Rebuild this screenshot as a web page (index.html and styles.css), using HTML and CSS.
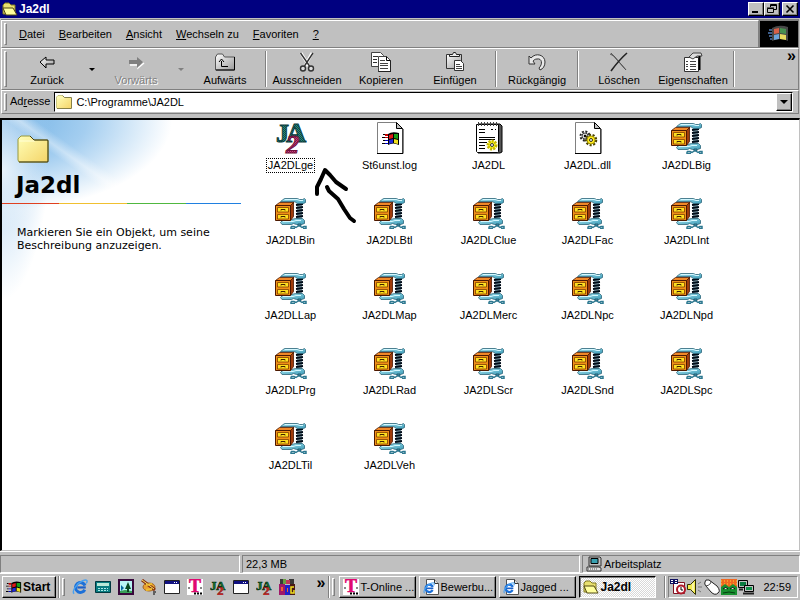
FILE: index.html
```html
<!DOCTYPE html>
<html lang="de">
<head>
<meta charset="utf-8">
<title>Ja2dl</title>
<link rel="stylesheet" href="styles.css">
</head>
<body>
<svg class="paints" aria-hidden="true">
  <defs>
    <linearGradient id="steel" x1="0" y1="0" x2="1" y2="1"><stop offset="0" stop-color="#a8e4f0"/><stop offset="1" stop-color="#3c9cb8"/></linearGradient>
    <linearGradient id="paperyellow" x1="0" y1="0" x2="1" y2="1"><stop offset="0" stop-color="#ffffb8"/><stop offset="1" stop-color="#f4d468"/></linearGradient>
    <linearGradient id="silver" x1="0" y1="0" x2="1" y2="1"><stop offset="0" stop-color="#fff"/><stop offset="1" stop-color="#999"/></linearGradient>
    <pattern id="greencheck" width="2" height="2" patternUnits="userSpaceOnUse"><path d="M0 0h2v2H0z" fill="#0c4a4a"/><path d="M0 0h1v1H0zM1 1h1v1H1z" fill="#2f8a78"/></pattern>
    <pattern id="redcheck" width="2" height="2" patternUnits="userSpaceOnUse"><path d="M0 0h2v2H0z" fill="#8c1848"/><path d="M0 0h1v1H0zM1 1h1v1H1z" fill="#c04880"/></pattern>
  </defs>
</svg>
<svg class="sprites" aria-hidden="true">
  <symbol id="zip" viewBox="0 0 32 32">
    <path d="M22 6h5v18h-5z" fill="#88a8b4"/>
    <path d="M21 8l7-1M21 11l7-1M21 14l7-1M21 17l7-1M21 20l7-1" stroke="#000c18" stroke-width="1.800"/>
    <path d="M5.500 4.500l4-3h13l2 1h3l2-1 1 1v3l-2 1h-6l-3-2H6z" fill="url(#steel)" stroke="#2c6478" stroke-width=".8"/>
    <path d="M10 2.500h12l3 1h3" stroke="#d4f8ff" fill="none"/>
    <path d="M5.500 25.500l3-3h8l4-1h7l2 2v3l-3 1h-5l-3-1-2 1H7z" fill="url(#steel)" stroke="#2c6478" stroke-width=".8"/>
    <path d="M8 24.500h10l3-1h5" stroke="#d4f8ff" fill="none"/>
    <path d="M23 27h3v2h-3z" fill="#3c9cb8" stroke="#143848" stroke-width=".6"/>
    <path d="M16 29.500h3l2 1 3-2 3 2 2-1h2v2h-3M16 29.500v2h4" fill="none" stroke="#2c7890" stroke-width="1.500"/>
    <path d="M.5 8.500l4-3h14.500l-3 3z" fill="#f08828" stroke="#4c1800" stroke-width=".8"/>
    <path d="M15.500 8.500l3-3v14l-3 4z" fill="#a03c0c" stroke="#4c1800" stroke-width=".8"/>
    <path d="M.5 8.500h15v15H.5z" fill="#f09018" stroke="#4c1800"/>
    <path d="M2.500 10.500h11v4.500h-11zM2.500 17.500h11v4.500h-11z" fill="#ffe020" stroke="#803c00" stroke-width=".8"/>
    <path d="M6 13.500v-1h4v1M6 20.500v-1h4v1" fill="none" stroke="#402000"/>
  </symbol>
  <symbol id="flag" viewBox="0 0 18 16">
    <path d="M1 3h2v1H1zM0 6h3v1H0zM1 9h2v1H1zM0 12h3v1H0z" fill="#000"/>
    <path d="M3 3h3v2H3zM3 6h3v1H3z" fill="#c00"/><path d="M3 9h3v1H3zM3 12h3v1H3z" fill="#00c"/>
    <path d="M6 3q4-3 11-1v12q-6-3-11 0z" fill="#000"/>
    <path d="M7 4l4-1v4l-4 1z" fill="#e01818"/><path d="M12 3h4v5l-4-1z" fill="#18a018"/>
    <path d="M7 9l4-1v4l-4 1z" fill="#2028d8"/><path d="M12 8l4 1v4l-4-1z" fill="#f0e020"/>
  </symbol>
  <symbol id="ja2" viewBox="0 0 32 32">
    <g font-family="Liberation Serif, serif" font-weight="bold" stroke-width="1">
      <text x="1" y="20" font-size="26" fill="url(#greencheck)" stroke="#0b3c3c">J</text>
      <text x="11" y="20" font-size="28" fill="url(#greencheck)" stroke="#0b3c3c">A</text>
      <text x="11" y="31" font-size="26" font-style="italic" fill="url(#redcheck)" stroke="#70103c">2</text>
    </g>
  </symbol>
  <symbol id="ja2small" viewBox="0 0 16 16">
    <g font-family="Liberation Serif, serif" font-weight="bold">
      <text x="0" y="11" font-size="13" fill="#187830" stroke="#043010" stroke-width=".6">J</text>
      <text x="6" y="11" font-size="13" fill="#187830" stroke="#043010" stroke-width=".6">A</text>
      <text x="7" y="16" font-size="13" fill="#d83030" stroke="#801010" stroke-width=".5">2</text>
    </g>
  </symbol>
  <symbol id="log" viewBox="0 0 32 32">
    <path d="M3.500.5h19l6 6v25h-25z" fill="#fff" stroke="#808080"/>
    <path d="M29 7v24.500H3" fill="none" stroke="#000"/><path d="M22.500.5v6h6z" fill="#c0c0c0" stroke="#000"/>
    <use href="#flag" x="8" y="9" width="18" height="16"/>
  </symbol>
  <symbol id="notepad" viewBox="0 0 32 32">
    <path d="M5 2h22l2 2v26l-2 1H5z" fill="#555" stroke="#000"/>
    <path d="M3.500 2.500h22v27l-1 1h-20l-1-1z" fill="#fff" stroke="#000"/>
    <path d="M5.500 0v4M8.500 0v4M11.500 0v4M14.500 0v4M17.500 0v4M20.500 0v4M23.500 0v4" stroke="#444"/>
    <path d="M6 7.500h6M18 7.500h2M22 7.500h1M6 10.500h6M6 15.500h16M6 17.500h16M6 20.500h8M6 23.500h6M6 26.500h6" stroke="#000"/>
    <circle cx="19" cy="23" r="4" fill="#ffff20" stroke="#c8b800" stroke-width="3" stroke-dasharray="2 1"/><circle cx="19" cy="23" r="1.500" fill="#fff" stroke="#333"/>
  </symbol>
  <symbol id="dll" viewBox="0 0 32 32">
    <path d="M3.500.5h19l6 6v25h-25z" fill="#fff" stroke="#808080"/>
    <path d="M29 7v24.500H3" fill="none" stroke="#000"/><path d="M22.500.5v6h6z" fill="#c0c0c0" stroke="#000"/>
    <circle cx="13" cy="14" r="4.500" fill="none" stroke="#222" stroke-width="2" stroke-dasharray="2 1.500"/><circle cx="13" cy="14" r="3" fill="#ddd" stroke="#444"/><circle cx="13" cy="14" r="1.200"/>
    <circle cx="19" cy="18" r="5" fill="none" stroke="#4c4400" stroke-width="2.500" stroke-dasharray="2 1.500"/><circle cx="19" cy="18" r="4" fill="#ffec20" stroke="#a89800"/><circle cx="19" cy="18" r="1.500" fill="#fff" stroke="#000" stroke-width=".8"/>
  </symbol>
  <symbol id="folder" viewBox="0 0 32 28">
    <path d="M1 25V4l3-3h9l4 4h13l1 1v20l-1 1H2z" fill="url(#paperyellow)" stroke="#98983c"/>
    <path d="M2 6h16" stroke="#ffffd8"/><path d="M13 1l4 4h14v22H2" fill="none" stroke="#443c10"/>
  </symbol>
  <symbol id="folderopen" viewBox="0 0 16 14">
    <path d="M1 12V3l2-2h4l2 2h4v9z" fill="#e8e070" stroke="#807820"/>
    <path d="M1 6h10l4 7H4z" fill="#ffff9c" stroke="#504810"/>
  </symbol>
  <symbol id="ie" viewBox="0 0 18 18">
    <circle cx="9.500" cy="9.500" r="5.500" fill="none" stroke="#1c70d8" stroke-width="3.500" stroke-dasharray="29 5.500" transform="rotate(28 9.500 9.500)"/>
    <path d="M6 9.500h9.500" stroke="#1c60c8" stroke-width="2.500"/>
    <path d="M2.500 16.500C-1 14.500 5 5 12 2c5-2 6 0 4 3" fill="none" stroke="#48a0f0" stroke-width="1.600"/>
  </symbol>
  <symbol id="iedoc" viewBox="0 0 16 16">
    <path d="M3.500.5h8l4 4v11h-12z" fill="#fff" stroke="#555"/><path d="M11.500.5v4h4" fill="#ddd" stroke="#333"/>
    <use href="#ie" x="0" y="3" width="12" height="12"/>
  </symbol>
  <symbol id="tonline" viewBox="0 0 16 16">
    <path d="M0 0h16v16H0z" fill="#fff"/>
    <text x="2" y="13" font-family="Liberation Serif, serif" font-weight="bold" font-size="18" fill="#e00870" stroke="#e00870" stroke-width=".6">T</text>
    <path d="M1 8h2v2H1zM13 8h2v2h-2z" fill="#888"/><path d="M7 14.500h2M10 14.500h2M13 14.500h2" stroke="#000" stroke-width="2"/>
  </symbol>
  <symbol id="window" viewBox="0 0 16 14"><path d="M.5.5h15v13H.5z" fill="#fff" stroke="#222"/><path d="M1 1h14v3H1z" fill="#101080"/><path d="M10 2h1v1h-1zM12 2h1v1h-1z" fill="#fff"/></symbol>
  <symbol id="pc" viewBox="0 0 16 15"><path d="M3 .5h11l1 1v8H3z" fill="#c0c0c0" stroke="#333"/><path d="M5 2h7v5H5z" fill="#38a0b0" stroke="#000"/><path d="M1 10.500h12l2 1v3H1z" fill="#e0e0e0" stroke="#333"/><path d="M2 12.500h10" stroke="#555" stroke-dasharray="1 1"/></symbol>
</svg>

<header class="titlebar">
  <svg class="i16"><use href="#folderopen"/></svg>
  <h1>Ja2dl</h1>
  <button class="cap" aria-label="Minimieren"><svg viewBox="0 0 12 10"><path d="M2 8h6" stroke="#000" stroke-width="2"/></svg></button>
  <button class="cap" aria-label="Wiederherstellen"><svg viewBox="0 0 12 10"><path d="M4.500 3V.5h6v5H8M4 1.500h7M1.500 4.500h6v4h-6zM1 4h7" fill="none" stroke="#000"/></svg></button>
  <button class="cap close" aria-label="Schließen"><svg viewBox="0 0 12 10"><path d="M2.500 1.500l7 7M9.500 1.500l-7 7" stroke="#000" stroke-width="1.600"/></svg></button>
</header>

<div class="bands">
  <div class="menuband">
    <nav class="band menu">
      <span class="grip"></span>
      <button><u>D</u>atei</button><button><u>B</u>earbeiten</button><button><u>A</u>nsicht</button><button><u>W</u>echseln zu</button><button><u>F</u>avoriten</button><button><u>?</u></button>
    </nav>
    <div class="throbber"><svg viewBox="0 0 22 18"><path d="M1 5h3M0 8h4M1 11h3M2 14h2" stroke="#3c5c88" stroke-width="2"/><path d="M4 3q7-4 16-1v14q-7-4-16 0z" fill="#484848"/><path d="M6 4l5-1v5l-5 1z" fill="#d86048"/><path d="M12 3l6 1v5l-6-1z" fill="#489050"/><path d="M6 10l5-1v5l-5 1z" fill="#6ca4dc"/><path d="M12 9l6 1v5l-6-1z" fill="#e8dc60"/></svg></div>
  </div>
  <div class="band tools">
    <span class="grip"></span>
    <button class="tool"><svg viewBox="0 0 20 20"><path d="M3 10l6-5v3h8v4H9v4z" fill="url(#silver)" stroke="#000"/></svg>Zurück</button>
    <button class="drop" aria-label="Zurück-Liste"><i></i></button>
    <button class="tool" disabled><svg viewBox="0 0 20 20"><path d="M18 11l-6 5v-3H4" fill="none" stroke="#fff" stroke-width="1.500"/><path d="M17 10l-6-5v3H3v4h8v4z" fill="#808080"/></svg>Vorwärts</button>
    <button class="drop" disabled aria-label="Vorwärts-Liste"><i></i></button>
    <button class="tool"><svg viewBox="0 0 20 20"><path d="M.5 18V5l2-3h5l2 3h10v13z" fill="url(#silver)" stroke="#555"/><path d="M19.500 5v13H1" fill="none" stroke="#000"/><path d="M6.500 9v5.500H13M4 10l2.500-3L9 10" fill="none" stroke="#000"/></svg>Aufwärts</button>
    <span class="sep"></span>
    <button class="tool"><svg viewBox="0 0 20 20"><path d="M4 1l8 13M15 1L8 14" stroke="#fff" stroke-width="3"/><path d="M3.500 1l9 13M16 1L7.500 14" stroke="#333" stroke-width="1.400"/><circle cx="6" cy="16.500" r="2.500" fill="#ddd" stroke="#333" stroke-width="1.400"/><circle cx="14" cy="16.500" r="2.500" fill="#ddd" stroke="#333" stroke-width="1.400"/></svg>Ausschneiden</button>
    <button class="tool"><svg viewBox="0 0 20 20"><path d="M.5.5h9l3 3v11H.5z" fill="#fff" stroke="#444"/><path d="M2 4.500h5M2 7.500h4M2 10.500h4" stroke="#333"/><path d="M7.500 4.500h8l4 4v11h-12z" fill="#fff" stroke="#444"/><path d="M15.500 4.500v4h4M20 9v11H7" fill="none" stroke="#000"/><path d="M9 8.500h5M9 11.500h8M9 13.500h8M9 16.500h8" stroke="#444"/></svg>Kopieren</button>
    <button class="tool"><svg viewBox="0 0 20 20"><path d="M1.500 2.500h15v14h-15z" fill="url(#silver)" stroke="#333"/><path d="M4.500 4.500v-2h3l1-2h2l1 2h3v2z" fill="#eee" stroke="#222"/><path d="M9.500 8.500h6l3 3v7h-9z" fill="#fff" stroke="#333"/><path d="M11 12.500h4M11 14.500h6M11 16.500h6" stroke="#444"/></svg>Einfügen</button>
    <span class="sep"></span>
    <button class="tool"><svg viewBox="0 0 20 20"><path d="M2 12V4l2 2c5-6 14-3 14 4 0 4-2 7-5 8l-1-2c4-4 3-10-2-9-2 0-3 1-4 2l2 3z" fill="#e8e8e8" stroke="#333"/></svg>Rückgängig</button>
    <span class="sep"></span>
    <button class="tool"><svg viewBox="0 0 20 20"><path d="M1 2l4 2 12 14M2 1l15 17" stroke="#555" fill="none"/><path d="M18 1Q10 8 2 19" stroke="#222" stroke-width="1.600" fill="none"/></svg>Löschen</button>
    <button class="tool"><svg viewBox="0 0 20 20"><path d="M1.500 5.500h14v14h-14z" fill="#fff" stroke="#333"/><path d="M3 9.500h2M7 9.500h6M3 12.500h2M7 12.500h6M3 14.500h2M7 14.500h6M3 17.500h2M7 17.500h6" stroke="#444"/><path d="M6 5l4-4h8l1 3h-5l-4 3z" fill="#ddd" stroke="#444"/><path d="M16.500 4v14" stroke="#000" stroke-width="2"/></svg>Eigenschaften</button>
    <span class="sep"></span>
    <button class="more" aria-label="Weitere Symbole">»</button>
  </div>
  <div class="band address">
    <span class="grip"></span>
    <label for="path">Ad<u>r</u>esse</label>
    <div class="combo">
      <svg class="i16"><use href="#folder"/></svg>
      <input id="path" type="text" value="C:\Programme\JA2DL">
      <button aria-label="Liste öffnen"><i></i></button>
    </div>
  </div>
</div>

<main>
  <aside>
    <svg class="big"><use href="#folder"/></svg>
    <h2>Ja2dl</h2>
    <div class="rule"></div>
    <p>Markieren Sie ein Objekt, um seine Beschreibung anzuzeigen.</p>
  </aside>
  <section class="files">
    <button class="focused"><svg><use href="#ja2"/></svg><span>JA2DLge</span></button>
    <button><svg><use href="#log"/></svg><span>St6unst.log</span></button>
    <button><svg><use href="#notepad"/></svg><span>JA2DL</span></button>
    <button><svg><use href="#dll"/></svg><span>JA2DL.dll</span></button>
    <button><svg><use href="#zip"/></svg><span>JA2DLBig</span></button>
    <button><svg><use href="#zip"/></svg><span>JA2DLBin</span></button>
    <button><svg><use href="#zip"/></svg><span>JA2DLBtl</span></button>
    <button><svg><use href="#zip"/></svg><span>JA2DLClue</span></button>
    <button><svg><use href="#zip"/></svg><span>JA2DLFac</span></button>
    <button><svg><use href="#zip"/></svg><span>JA2DLInt</span></button>
    <button><svg><use href="#zip"/></svg><span>JA2DLLap</span></button>
    <button><svg><use href="#zip"/></svg><span>JA2DLMap</span></button>
    <button><svg><use href="#zip"/></svg><span>JA2DLMerc</span></button>
    <button><svg><use href="#zip"/></svg><span>JA2DLNpc</span></button>
    <button><svg><use href="#zip"/></svg><span>JA2DLNpd</span></button>
    <button><svg><use href="#zip"/></svg><span>JA2DLPrg</span></button>
    <button><svg><use href="#zip"/></svg><span>JA2DLRad</span></button>
    <button><svg><use href="#zip"/></svg><span>JA2DLScr</span></button>
    <button><svg><use href="#zip"/></svg><span>JA2DLSnd</span></button>
    <button><svg><use href="#zip"/></svg><span>JA2DLSpc</span></button>
    <button><svg><use href="#zip"/></svg><span>JA2DLTil</span></button>
    <button><svg><use href="#zip"/></svg><span>JA2DLVeh</span></button>
    <svg class="arrow" viewBox="0 0 50 60"><path d="M7 29v-7l4-8 4-9 5 5 6 7 10 7M17 22l2 4 9 8 6 10 6 9 4 3" fill="none" stroke="#000" stroke-width="4" stroke-linecap="round" stroke-linejoin="round"/></svg>
  </section>
</main>

<footer class="status">
  <div></div><div>22,3 MB</div><div><svg class="i16"><use href="#pc"/></svg>Arbeitsplatz</div>
</footer>

<div class="taskbar">
  <button class="start"><svg viewBox="0 0 18 16"><use href="#flag"/></svg>Start</button>
  <span class="edge"></span><span class="grip"></span>
  <div class="quick">
    <button aria-label="Internet Explorer"><svg><use href="#ie"/></svg></button>
    <button aria-label="Rechner"><svg viewBox="0 0 16 16"><path d="M.5 2.500h15v11H.5z" fill="#087c80" stroke="#003840"/><path d="M2 4h12v3H2z" fill="#b8e8d8"/><path d="M3 9.500h10M3 11.500h10" stroke="#a8e8e8" stroke-dasharray="2 1"/></svg></button>
    <button aria-label="Bild"><svg viewBox="0 0 16 16"><path d="M1 1h14v14H1z" fill="#b8f4f4" stroke="#38083c" stroke-width="2"/><path d="M2 14v-2l5-1 7 1v2z" fill="#38a058"/><path d="M10 3l3 7H7zM9 10h2v3H9z" fill="#084820"/><path d="M3 6l3 3-3 3z" fill="#0868a0"/></svg></button>
    <button aria-label="Malen"><svg viewBox="0 0 16 16"><ellipse cx="8" cy="8" rx="6" ry="4" fill="#e8a030" stroke="#a06020"/><path d="M1 1l13 10" stroke="#883010" stroke-width="3"/><path d="M1 1l12 9" stroke="#f8e868"/><path d="M5 6l6-1M5 11l6-1" stroke="#f0c030" stroke-width="2"/><path d="M12 13h3M12 15h2" stroke="#000"/></svg></button>
    <button aria-label="Fenster"><svg><use href="#window"/></svg></button>
    <button aria-label="T-Online"><svg><use href="#tonline"/></svg></button>
    <button aria-label="JA2"><svg><use href="#ja2small"/></svg></button>
    <button aria-label="Fenster 2"><svg><use href="#window"/></svg></button>
    <button aria-label="JA2 2"><svg><use href="#ja2small"/></svg></button>
    <button aria-label="MPG"><svg viewBox="0 0 16 16"><path d="M1 0h3v5H1zM10 0h5v5h-5z" fill="#383838"/><path d="M4 0h3v5H4z" fill="#68a040"/><path d="M7 1h4v4H7z" fill="#c03858"/><path d="M0 5h6v11H0z" fill="#a01868"/><path d="M6 6h5v10H6z" fill="#2020c8"/><path d="M11 5h5v11h-5z" fill="#481818"/><path d="M15 8h-3v6h3v-3" fill="none" stroke="#f0e020" stroke-width="1.500"/><path d="M2 8h2v4H2zM8 9h1v4H8z" fill="#f06030"/></svg></button>
  </div>
  <button class="more" aria-label="Mehr">»</button>
  <span class="edge"></span><span class="grip"></span>
  <div class="tasks">
    <button><svg><use href="#tonline"/></svg>T-Online ...</button>
    <button><svg><use href="#iedoc"/></svg>Bewerbu...</button>
    <button><svg><use href="#iedoc"/></svg>Jagged ...</button>
    <button class="active"><svg><use href="#folderopen"/></svg>Ja2dl</button>
  </div>
  <span class="edge"></span>
  <div class="tray">
    <svg viewBox="0 0 16 16"><path d="M3.500 3.500h11v11h-11z" fill="#fff" stroke="#801020"/><path d="M0 0h8v5H0z" fill="#101060"/><path d="M1 1.500h2M5 1.500h2M1 3.500h2M5 3.500h2" stroke="#fff"/><circle cx="11" cy="10.500" r="4" fill="#fff" stroke="#b01828" stroke-width="2"/><path d="M11 8v3h2" fill="none" stroke="#000"/></svg>
    <svg viewBox="0 0 16 16"><path d="M.5 5.500h3l5-5v15l-5-5h-3z" fill="#f4ec50" stroke="#303000"/><path d="M6 4v8" stroke="#fff"/><path d="M11 5l3-2M11 8h4M11 11l3 2" stroke="#777"/></svg>
    <svg viewBox="0 0 16 16"><path d="M1 3q0-3 4-2l8 6q4 5 1 7-3 3-7-1L2 7q-2-2-1-4z" fill="#fff" stroke="#222"/><path d="M2 7q5-1 5-5" fill="none" stroke="#444"/></svg>
    <svg viewBox="0 0 16 16"><path d="M0 0h16v16H0z" fill="#f06820"/><path d="M0 2h16M0 5h16" stroke="#f8d838" stroke-dasharray="1 2"/><path d="M0 16V8l4-3 4 3 4-3 4 3v8z" fill="#189030"/><path d="M2 10q3-3 5 0M9 10q3-3 5 0" fill="#fff" stroke="#000"/><path d="M2 14q6-2 12 0" stroke="#043c10" fill="none"/></svg>
    <svg viewBox="0 0 16 16"><path d="M.5 1.500h9v7h-9z" fill="#c0c0c0" stroke="#000"/><path d="M2 3h6v4H2z" fill="#087c40"/><path d="M6.500 6.500h9v6h-9z" fill="#c0c0c0" stroke="#000"/><path d="M8 8h6v3H8z" fill="#0c9048"/><path d="M1 10.500h4M5 14.500h11" stroke="#222" stroke-width="2"/></svg>
    <time>22:59</time>
  </div>
</div>
</body>
</html>
```
FILE: styles.css
```css
* { box-sizing: border-box; }

body {
  margin: 0;
  height: 100vh;
  display: flex;
  flex-direction: column;
  background: #c0c0c0;
  color: #000;
  font: 11px/13px "Liberation Sans", sans-serif;
  overflow: hidden;
}

button, input { font: inherit; color: inherit; }
button { background: none; border: 0; padding: 0; margin: 0; white-space: nowrap; }
svg { display: block; flex: none; }
.paints { position: absolute; width: 0; height: 0; }
.sprites { display: none; }
.i16 { width: 16px; height: 16px; }

.grip {
  flex: none;
  width: 3px;
  border: 1px solid;
  border-color: #fff #808080 #808080 #fff;
  margin: 2px;
}

/* Title bar */
.titlebar {
  flex: none;
  height: 18px;
  display: flex;
  align-items: center;
  padding: 0 2px;
  background: #000080;
  color: #fff;
}
.titlebar h1 { flex: 1; margin: 0 0 0 1px; font-size: 12px; }
.cap {
  width: 16px;
  height: 14px;
  display: grid;
  place-items: center;
  background: #c0c0c0;
  border: 1px solid;
  border-color: #fff #000 #000 #fff;
  box-shadow: inset -1px -1px #808080;
}
.cap svg { width: 12px; height: 10px; }
.close { margin-left: 2px; }

/* Bands */
.bands {
  flex: none;
  margin: 1px 1px 4px;
  border-top: 1px solid #808080;
}
.band {
  display: flex;
  border: 1px solid;
  border-color: #fff #808080 #808080 #fff;
}
.menuband { display: flex; }
.menu { flex: 1; height: 28px; }
.menu button { padding: 0 7px; }
.menu .grip { margin-right: 5px; }
.throbber {
  width: 40px;
  display: grid;
  place-items: center;
  background: #000;
  border: 1px solid #808080;
}
.throbber svg { width: 22px; height: 18px; }

.tools { height: 42px; }
.tool {
  flex: none;
  width: 74px;
  display: flex;
  flex-direction: column;
  align-items: center;
  padding-top: 3px;
  gap: 2px;
}
.tool svg { width: 20px; height: 20px; }
.tools .grip { margin-right: 3px; }
.tool:disabled { color: #808080; text-shadow: 1px 1px #fff; }
.drop { width: 15px; display: grid; place-items: center; }
i {
  border: 3px solid transparent;
  border-top-color: #000;
  border-bottom: 0;
}
.drop:disabled i { border-top-color: #808080; }
.sep {
  flex: none;
  width: 2px;
  margin: 2px 3px;
  border-left: 1px solid #808080;
  border-right: 1px solid #fff;
}
.more {
  align-self: flex-start;
  font-size: 16px;
  line-height: 14px;
  font-weight: bold;
}
.tools .more { margin: 0 2px 0 auto; }

.address { height: 24px; align-items: stretch; }
.address label { padding: 4px 4px 0 1px; }
.combo {
  flex: 1;
  display: flex;
  align-items: center;
  margin: 1px 5px 1px 0;
  padding-left: 1px;
  background: #fff;
  border: 1px solid;
  border-color: #000 #fff #fff #000;
}
.combo input {
  flex: 1;
  min-width: 0;
  border: 0;
  outline: 0;
  background: none;
  padding: 0 4px;
}
.combo button {
  width: 16px;
  height: 18px;
  display: grid;
  place-items: center;
  background: #c0c0c0;
  border: 1px solid;
  border-color: #fff #000 #000 #fff;
  box-shadow: inset -1px -1px #808080;
}
.combo i { border-width: 4px 4px 0; }

/* Folder view */
main {
  flex: 1;
  min-height: 0;
  display: flex;
  background: #fff;
  border: solid;
  border-width: 2px 1px 1px 2px;
  border-color: #000 #c0c0c0 #c0c0c0 #000;
}
aside {
  flex: none;
  width: 239px;
  padding-top: 15px;
  background:
    linear-gradient(35deg, #fff0 47%, #fff6 52%, #fff0 58%) 0 0 / 150px 90px no-repeat,
    radial-gradient(ellipse 46px 60px at 0 50px, #fffb, #fff0) no-repeat,
    radial-gradient(ellipse 50px 180px at 0 0, #a8cff0, #a8cff000) no-repeat,
    radial-gradient(ellipse 170px 90px at 0 0, #6eb0e4, #a4cef0 50%, #fff0) no-repeat,
    #fff;
}
.big { width: 32px; height: 28px; margin-left: 15px; }
aside h2 {
  margin: 8px 0 4px 14px;
  font: bold 23px/28px "DejaVu Sans", Verdana, sans-serif;
}
.rule {
  height: 1px;
  background: linear-gradient(90deg, #e04020 57px, #f0c030 57px 125px, #50b840 125px 184px, #2080e0 184px);
}
aside p {
  margin: 22px 16px 0 15px;
  font: 11px/13px "DejaVu Sans", Verdana, sans-serif;
}
.files {
  flex: 1;
  position: relative;
  display: grid;
  grid-template-columns: repeat(auto-fill, 99px);
  grid-auto-rows: 75px;
}
.files button {
  display: flex;
  flex-direction: column;
  align-items: center;
  padding-top: 2px;
  gap: 4px;
}
.files button svg { width: 32px; height: 32px; }
.files span { padding: 0 1px; border: 1px dotted transparent; }
.files .focused span { border-color: #000; }
.arrow {
  position: absolute;
  left: 69px;
  top: 45px;
  width: 50px;
  height: 60px;
}

/* Status bar */
.status {
  flex: none;
  height: 22px;
  display: grid;
  grid-template-columns: 240px 1fr 218px;
  gap: 2px;
  padding: 3px 0 1px;
  border-top: 1px solid #fff;
}
.status div {
  display: flex;
  align-items: center;
  gap: 2px;
  padding-left: 3px;
  border: 1px solid;
  border-color: #808080 #fff #fff #808080;
}

/* Taskbar */
.taskbar {
  flex: none;
  height: 27px;
  display: flex;
  padding: 2px;
  border-top: 1px solid #fff;
}
.start, .tasks button {
  display: flex;
  align-items: center;
  background: #c0c0c0;
  border: 1px solid;
  border-color: #fff #000 #000 #fff;
  box-shadow: inset -1px -1px #808080;
}
.start {
  width: 54px;
  gap: 1px;
  padding-left: 3px;
  font-weight: bold;
  font-size: 12px;
}
.start svg { width: 16px; height: 15px; }
.edge {
  width: 2px;
  margin-left: 2px;
  border-left: 1px solid #808080;
  border-right: 1px solid #fff;
}
.quick { display: flex; gap: 7px; margin-left: 5px; align-items: center; }
.quick svg { width: 16px; height: 16px; }
.taskbar .more { margin: 0 1px 0 auto; }
.tasks { display: flex; gap: 3px; margin: 0 6px 0 2px; }
.tasks button {
  width: 77px;
  gap: 1px;
  padding-left: 3px;
}
.tasks svg { width: 16px; height: 16px; }
.tasks .active {
  font-weight: bold;
  font-size: 12px;
  background: repeating-conic-gradient(#fff 0 25%, #d8d8d8 0 50%) 0 0 / 2px 2px;
  border-color: #000 #fff #fff #000;
  box-shadow: inset 1px 1px #808080;
}
.tray {
  display: flex;
  align-items: center;
  gap: 1px;
  margin-left: 2px;
  padding: 0 6px 0 1px;
  border: 1px solid;
  border-color: #808080 #fff #fff #808080;
}
.tray svg { width: 16px; height: 16px; }
.tray time { margin-left: 8px; }
```
